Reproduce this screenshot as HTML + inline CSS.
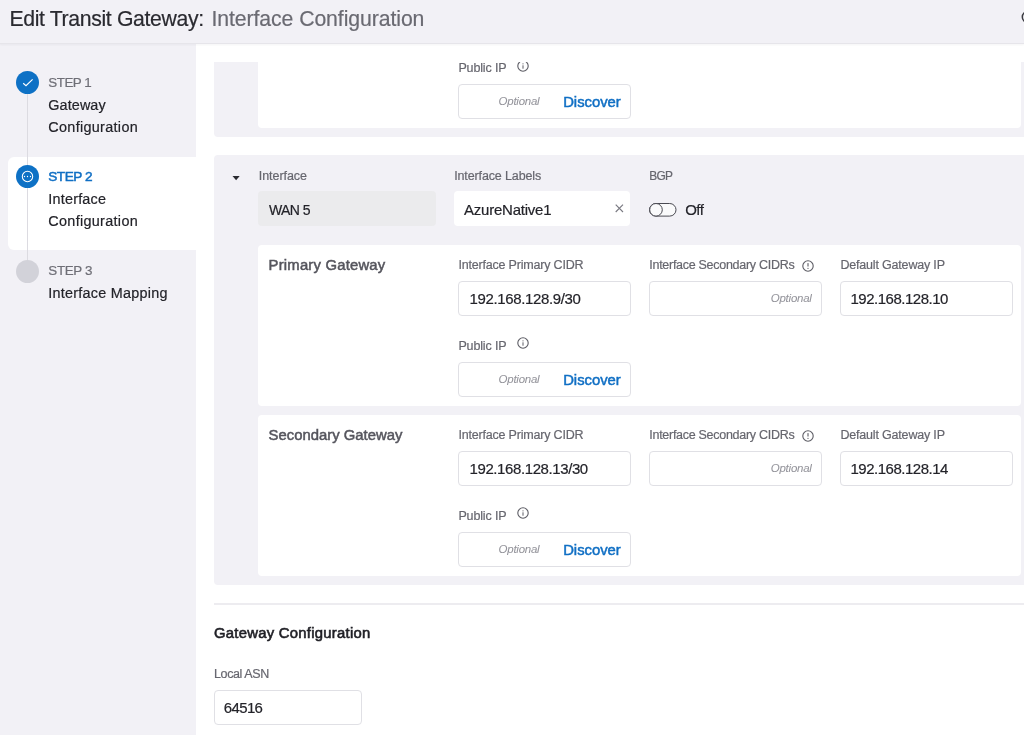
<!DOCTYPE html>
<html><head><meta charset="utf-8"><title>Edit Transit Gateway</title>
<style>
html,body{margin:0;padding:0;width:1024px;height:735px;overflow:hidden;background:#fff;font-family:"Liberation Sans",sans-serif;}
.t{position:absolute;white-space:nowrap;line-height:0;}
#txt{position:absolute;left:0;top:0;width:1024px;height:735px;will-change:transform;}
.b{position:absolute;box-sizing:border-box;}
#hdr{position:absolute;left:0;top:0;width:1024px;height:44px;background:#f2f1f6;border-bottom:1px solid #e6e5ea;box-sizing:border-box;box-shadow:0 1px 2px rgba(40,40,60,0.05);}
#side{position:absolute;left:0;top:44px;width:196px;height:691px;background:#f2f1f6;}
#active{position:absolute;left:8px;top:157px;width:188px;height:93px;background:#fff;border-radius:6px 0 0 6px;}
#vline{position:absolute;left:27px;top:90px;width:1px;height:175px;background:#dcdbe1;}
.circ{position:absolute;width:23px;height:23px;border-radius:50%;}
#scroll{position:absolute;left:196px;top:62px;width:828px;height:673px;overflow:hidden;}
#scroll .inner{position:absolute;left:-196px;top:-62px;width:1024px;height:800px;}
.cont{background:#f2f1f6;border-radius:4px;}
.card{background:#fff;border-radius:4px;}
.inp{background:#fff;border:1px solid #e0e0e5;border-radius:4px;}
.inpw{background:#fff;border-radius:4px;}
.ro{background:#ebebed;border-radius:4px;}
</style></head><body>
<div id="side"></div>
<div id="hdr"></div>
<div class="b" style="left:1020.8px;top:10.2px;line-height:0"><svg width="14" height="14" viewBox="0 0 14 14"><circle cx="7" cy="7" r="5.7" fill="none" stroke="#3a3a40" stroke-width="1.5"/></svg></div>
<div id="active"></div>
<div id="vline"></div>
<div class="circ" style="left:16px;top:71px;background:#0e71c5"><svg width="23" height="23" viewBox="0 0 23 23" style="position:absolute;left:0;top:0"><path d="M7.2 12.2L10 14.6L16.6 8.3" fill="none" stroke="#fff" stroke-width="1.15"/></svg></div>
<div class="circ" style="left:16px;top:165px;background:#0e71c5"><svg width="23" height="23" viewBox="0 0 23 23" style="position:absolute;left:0;top:0"><circle cx="11.5" cy="11.5" r="5.2" fill="none" stroke="#fff" stroke-width="1.05"/><circle cx="8.5" cy="11.5" r="0.65" fill="#fff"/><circle cx="11.5" cy="11.5" r="0.65" fill="#fff"/><circle cx="14.5" cy="11.5" r="0.65" fill="#fff"/></svg></div>
<div class="circ" style="left:16px;top:259.5px;background:#d2d2d9"></div>
<div id="scroll"><div class="inner">
<div class="b cont" style="left:214px;top:20px;width:820px;height:117px;"></div>
<div class="b card" style="left:258px;top:10px;width:763px;height:118px;"></div>
<div class="b inp" style="left:458px;top:84px;width:173px;height:35px;"></div>
<div class="b cont" style="left:214px;top:155px;width:820px;height:430px;"></div>
<div class="b ro" style="left:258px;top:191px;width:178px;height:35px;"></div>
<div class="b inpw" style="left:454px;top:191px;width:176px;height:35px;"></div>
<div class="b card" style="left:258px;top:245px;width:763px;height:161px;"></div>
<div class="b inp" style="left:458px;top:281px;width:173px;height:35px;"></div>
<div class="b inp" style="left:649px;top:281px;width:173px;height:35px;"></div>
<div class="b inp" style="left:840px;top:281px;width:173px;height:35px;"></div>
<div class="b inp" style="left:458px;top:362px;width:173px;height:35px;"></div>
<div class="b card" style="left:258px;top:415px;width:763px;height:161px;"></div>
<div class="b inp" style="left:458px;top:451px;width:173px;height:35px;"></div>
<div class="b inp" style="left:649px;top:451px;width:173px;height:35px;"></div>
<div class="b inp" style="left:840px;top:451px;width:173px;height:35px;"></div>
<div class="b inp" style="left:458px;top:532px;width:173px;height:35px;"></div>
<div class="b " style="left:214px;top:603px;width:810px;height:2px;background:#edecf0"></div>
<div class="b inp" style="left:214px;top:690px;width:148px;height:35px;"></div>
<div class="b" style="left:516.8px;top:59.6px;line-height:0"><svg width="12" height="12" viewBox="0 0 12 12"><circle cx="6" cy="6" r="5.2" fill="none" stroke="#5c5c64" stroke-width="1.1"/><rect x="5.5" y="5.3" width="1" height="3.4" fill="#5c5c64"/><circle cx="6" cy="3.8" r="0.6" fill="#5c5c64"/></svg></div>
<div class="b" style="left:516.8px;top:337.2px;line-height:0"><svg width="12" height="12" viewBox="0 0 12 12"><circle cx="6" cy="6" r="5.2" fill="none" stroke="#5c5c64" stroke-width="1.1"/><rect x="5.5" y="5.3" width="1" height="3.4" fill="#5c5c64"/><circle cx="6" cy="3.8" r="0.6" fill="#5c5c64"/></svg></div>
<div class="b" style="left:516.8px;top:507.2px;line-height:0"><svg width="12" height="12" viewBox="0 0 12 12"><circle cx="6" cy="6" r="5.2" fill="none" stroke="#5c5c64" stroke-width="1.1"/><rect x="5.5" y="5.3" width="1" height="3.4" fill="#5c5c64"/><circle cx="6" cy="3.8" r="0.6" fill="#5c5c64"/></svg></div>
<div class="b" style="left:802.1px;top:259.8px;line-height:0"><svg width="12" height="12" viewBox="0 0 12 12"><circle cx="6" cy="6" r="5.2" fill="none" stroke="#5c5c64" stroke-width="1.1"/><rect x="5.45" y="3.1" width="1.1" height="3.4" fill="#5c5c64"/><circle cx="6" cy="8.3" r="0.65" fill="#5c5c64"/></svg></div>
<div class="b" style="left:802.1px;top:429.8px;line-height:0"><svg width="12" height="12" viewBox="0 0 12 12"><circle cx="6" cy="6" r="5.2" fill="none" stroke="#5c5c64" stroke-width="1.1"/><rect x="5.45" y="3.1" width="1.1" height="3.4" fill="#5c5c64"/><circle cx="6" cy="8.3" r="0.65" fill="#5c5c64"/></svg></div>
<div class="b" style="left:614.5px;top:204.2px;line-height:0"><svg width="9" height="9" viewBox="0 0 9 9"><path d="M0.7 0.7L8 8M8 0.7L0.7 8" stroke="#7a7a82" stroke-width="1.15"/></svg></div>
<div class="b" style="left:648.5px;top:202.5px;line-height:0"><svg width="28" height="14" viewBox="0 0 28 14"><rect x="0.5" y="0.5" width="26.5" height="12.6" rx="6.3" fill="#fafafb" stroke="#4a4a52" stroke-width="1"/><circle cx="7" cy="6.8" r="6.3" fill="#fafafb" stroke="#4a4a52" stroke-width="1"/></svg></div>
<div class="b" style="left:232px;top:175.5px;line-height:0"><svg width="8" height="4.5" viewBox="0 0 8 4.5"><path d="M0.5 0H7.7L4.1 4.2Z" fill="#2a2a30"/></svg></div>
</div></div>
<div id="txt"><div class="t" style="left:9.40px;top:18.64px;font-size:21.22px;letter-spacing:-0.345px;color:#2a2a30;font-weight:400;font-style:normal;-webkit-text-stroke:0.2px #2a2a30;">Edit Transit Gateway:</div>
<div class="t" style="left:211.50px;top:18.64px;font-size:21.22px;letter-spacing:-0.080px;color:#6a6a72;font-weight:400;font-style:normal;-webkit-text-stroke:0.2px #6a6a72;">Interface Configuration</div>
<div class="t" style="left:48.30px;top:82.95px;font-size:13.40px;letter-spacing:-0.492px;color:#6e6e76;font-weight:400;font-style:normal;-webkit-text-stroke:0.2px #6e6e76;">STEP 1</div>
<div class="t" style="left:48.30px;top:104.81px;font-size:14.39px;letter-spacing:0.106px;color:#232329;font-weight:400;font-style:normal;-webkit-text-stroke:0.2px #232329;">Gateway</div>
<div class="t" style="left:48.30px;top:127.01px;font-size:14.39px;letter-spacing:0.324px;color:#232329;font-weight:400;font-style:normal;-webkit-text-stroke:0.2px #232329;">Configuration</div>
<div class="t" style="left:48.30px;top:176.89px;font-size:13.60px;letter-spacing:-0.490px;color:#106fc4;font-weight:400;font-style:normal;-webkit-text-stroke:0.5px #106fc4;">STEP 2</div>
<div class="t" style="left:48.30px;top:199.01px;font-size:14.39px;letter-spacing:0.216px;color:#232329;font-weight:400;font-style:normal;-webkit-text-stroke:0.2px #232329;">Interface</div>
<div class="t" style="left:48.30px;top:221.21px;font-size:14.39px;letter-spacing:0.324px;color:#232329;font-weight:400;font-style:normal;-webkit-text-stroke:0.2px #232329;">Configuration</div>
<div class="t" style="left:48.30px;top:271.15px;font-size:13.40px;letter-spacing:-0.352px;color:#6e6e76;font-weight:400;font-style:normal;-webkit-text-stroke:0.2px #6e6e76;">STEP 3</div>
<div class="t" style="left:48.30px;top:293.01px;font-size:14.39px;letter-spacing:0.257px;color:#232329;font-weight:400;font-style:normal;-webkit-text-stroke:0.2px #232329;">Interface Mapping</div>
<div class="t" style="left:458.40px;top:67.77px;font-size:12.50px;letter-spacing:-0.139px;color:#66666e;font-weight:400;font-style:normal;-webkit-text-stroke:0.2px #66666e;">Public IP</div>
<div class="t" style="left:498.60px;top:100.72px;font-size:11.48px;letter-spacing:-0.237px;color:#94949b;font-weight:400;font-style:italic;-webkit-text-stroke:0.05px #94949b;">Optional</div>
<div class="t" style="left:563.20px;top:102.16px;font-size:14.83px;letter-spacing:-0.025px;color:#106fc4;font-weight:400;font-style:normal;-webkit-text-stroke:0.5px #106fc4;">Discover</div>
<div class="t" style="left:258.80px;top:175.67px;font-size:12.50px;letter-spacing:-0.053px;color:#66666e;font-weight:400;font-style:normal;-webkit-text-stroke:0.2px #66666e;">Interface</div>
<div class="t" style="left:454.20px;top:176.17px;font-size:12.50px;letter-spacing:-0.129px;color:#66666e;font-weight:400;font-style:normal;-webkit-text-stroke:0.2px #66666e;">Interface Labels</div>
<div class="t" style="left:649.20px;top:176.37px;font-size:11.90px;letter-spacing:-0.655px;color:#66666e;font-weight:400;font-style:normal;-webkit-text-stroke:0.2px #66666e;">BGP</div>
<div class="t" style="left:268.90px;top:209.85px;font-size:14.00px;letter-spacing:-0.555px;color:#232329;font-weight:400;font-style:normal;-webkit-text-stroke:0.2px #232329;">WAN 5</div>
<div class="t" style="left:464.00px;top:209.51px;font-size:14.97px;letter-spacing:-0.209px;color:#232329;font-weight:400;font-style:normal;-webkit-text-stroke:0.2px #232329;">AzureNative1</div>
<div class="t" style="left:685.30px;top:209.51px;font-size:14.97px;letter-spacing:-0.581px;color:#232329;font-weight:400;font-style:normal;-webkit-text-stroke:0.2px #232329;">Off</div>
<div class="t" style="left:268.60px;top:265.06px;font-size:14.83px;letter-spacing:0.206px;color:#55555d;font-weight:400;font-style:normal;-webkit-text-stroke:0.5px #55555d;">Primary Gateway</div>
<div class="t" style="left:458.40px;top:265.17px;font-size:12.50px;letter-spacing:-0.190px;color:#66666e;font-weight:400;font-style:normal;-webkit-text-stroke:0.2px #66666e;">Interface Primary CIDR</div>
<div class="t" style="left:649.30px;top:265.17px;font-size:12.50px;letter-spacing:-0.284px;color:#66666e;font-weight:400;font-style:normal;-webkit-text-stroke:0.2px #66666e;">Interface Secondary CIDRs</div>
<div class="t" style="left:840.40px;top:265.17px;font-size:12.50px;letter-spacing:-0.182px;color:#66666e;font-weight:400;font-style:normal;-webkit-text-stroke:0.2px #66666e;">Default Gateway IP</div>
<div class="t" style="left:469.50px;top:299.01px;font-size:14.97px;letter-spacing:-0.350px;color:#232329;font-weight:400;font-style:normal;-webkit-text-stroke:0.2px #232329;">192.168.128.9/30</div>
<div class="t" style="left:770.80px;top:297.62px;font-size:11.48px;letter-spacing:-0.237px;color:#94949b;font-weight:400;font-style:italic;-webkit-text-stroke:0.05px #94949b;">Optional</div>
<div class="t" style="left:850.50px;top:298.61px;font-size:14.97px;letter-spacing:-0.473px;color:#232329;font-weight:400;font-style:normal;-webkit-text-stroke:0.2px #232329;">192.168.128.10</div>
<div class="t" style="left:458.40px;top:345.77px;font-size:12.50px;letter-spacing:-0.139px;color:#66666e;font-weight:400;font-style:normal;-webkit-text-stroke:0.2px #66666e;">Public IP</div>
<div class="t" style="left:498.60px;top:378.72px;font-size:11.48px;letter-spacing:-0.237px;color:#94949b;font-weight:400;font-style:italic;-webkit-text-stroke:0.05px #94949b;">Optional</div>
<div class="t" style="left:563.20px;top:380.16px;font-size:14.83px;letter-spacing:-0.025px;color:#106fc4;font-weight:400;font-style:normal;-webkit-text-stroke:0.5px #106fc4;">Discover</div>
<div class="t" style="left:268.60px;top:435.06px;font-size:14.83px;letter-spacing:0.012px;color:#55555d;font-weight:400;font-style:normal;-webkit-text-stroke:0.5px #55555d;">Secondary Gateway</div>
<div class="t" style="left:458.40px;top:435.17px;font-size:12.50px;letter-spacing:-0.190px;color:#66666e;font-weight:400;font-style:normal;-webkit-text-stroke:0.2px #66666e;">Interface Primary CIDR</div>
<div class="t" style="left:649.30px;top:435.17px;font-size:12.50px;letter-spacing:-0.284px;color:#66666e;font-weight:400;font-style:normal;-webkit-text-stroke:0.2px #66666e;">Interface Secondary CIDRs</div>
<div class="t" style="left:840.40px;top:435.17px;font-size:12.50px;letter-spacing:-0.182px;color:#66666e;font-weight:400;font-style:normal;-webkit-text-stroke:0.2px #66666e;">Default Gateway IP</div>
<div class="t" style="left:469.50px;top:469.01px;font-size:14.97px;letter-spacing:-0.385px;color:#232329;font-weight:400;font-style:normal;-webkit-text-stroke:0.2px #232329;">192.168.128.13/30</div>
<div class="t" style="left:770.80px;top:467.62px;font-size:11.48px;letter-spacing:-0.237px;color:#94949b;font-weight:400;font-style:italic;-webkit-text-stroke:0.05px #94949b;">Optional</div>
<div class="t" style="left:850.50px;top:468.61px;font-size:14.97px;letter-spacing:-0.473px;color:#232329;font-weight:400;font-style:normal;-webkit-text-stroke:0.2px #232329;">192.168.128.14</div>
<div class="t" style="left:458.40px;top:515.77px;font-size:12.50px;letter-spacing:-0.139px;color:#66666e;font-weight:400;font-style:normal;-webkit-text-stroke:0.2px #66666e;">Public IP</div>
<div class="t" style="left:498.60px;top:548.72px;font-size:11.48px;letter-spacing:-0.237px;color:#94949b;font-weight:400;font-style:italic;-webkit-text-stroke:0.05px #94949b;">Optional</div>
<div class="t" style="left:563.20px;top:550.16px;font-size:14.83px;letter-spacing:-0.025px;color:#106fc4;font-weight:400;font-style:normal;-webkit-text-stroke:0.5px #106fc4;">Discover</div>
<div class="t" style="left:214.00px;top:633.26px;font-size:14.83px;letter-spacing:0.272px;color:#1f1f25;font-weight:400;font-style:normal;-webkit-text-stroke:0.6px #1f1f25;">Gateway Configuration</div>
<div class="t" style="left:214.00px;top:674.07px;font-size:12.50px;letter-spacing:-0.384px;color:#66666e;font-weight:400;font-style:normal;-webkit-text-stroke:0.2px #66666e;">Local ASN</div>
<div class="t" style="left:223.80px;top:707.61px;font-size:14.97px;letter-spacing:-0.630px;color:#232329;font-weight:400;font-style:normal;-webkit-text-stroke:0.2px #232329;">64516</div></div>
</body></html>
